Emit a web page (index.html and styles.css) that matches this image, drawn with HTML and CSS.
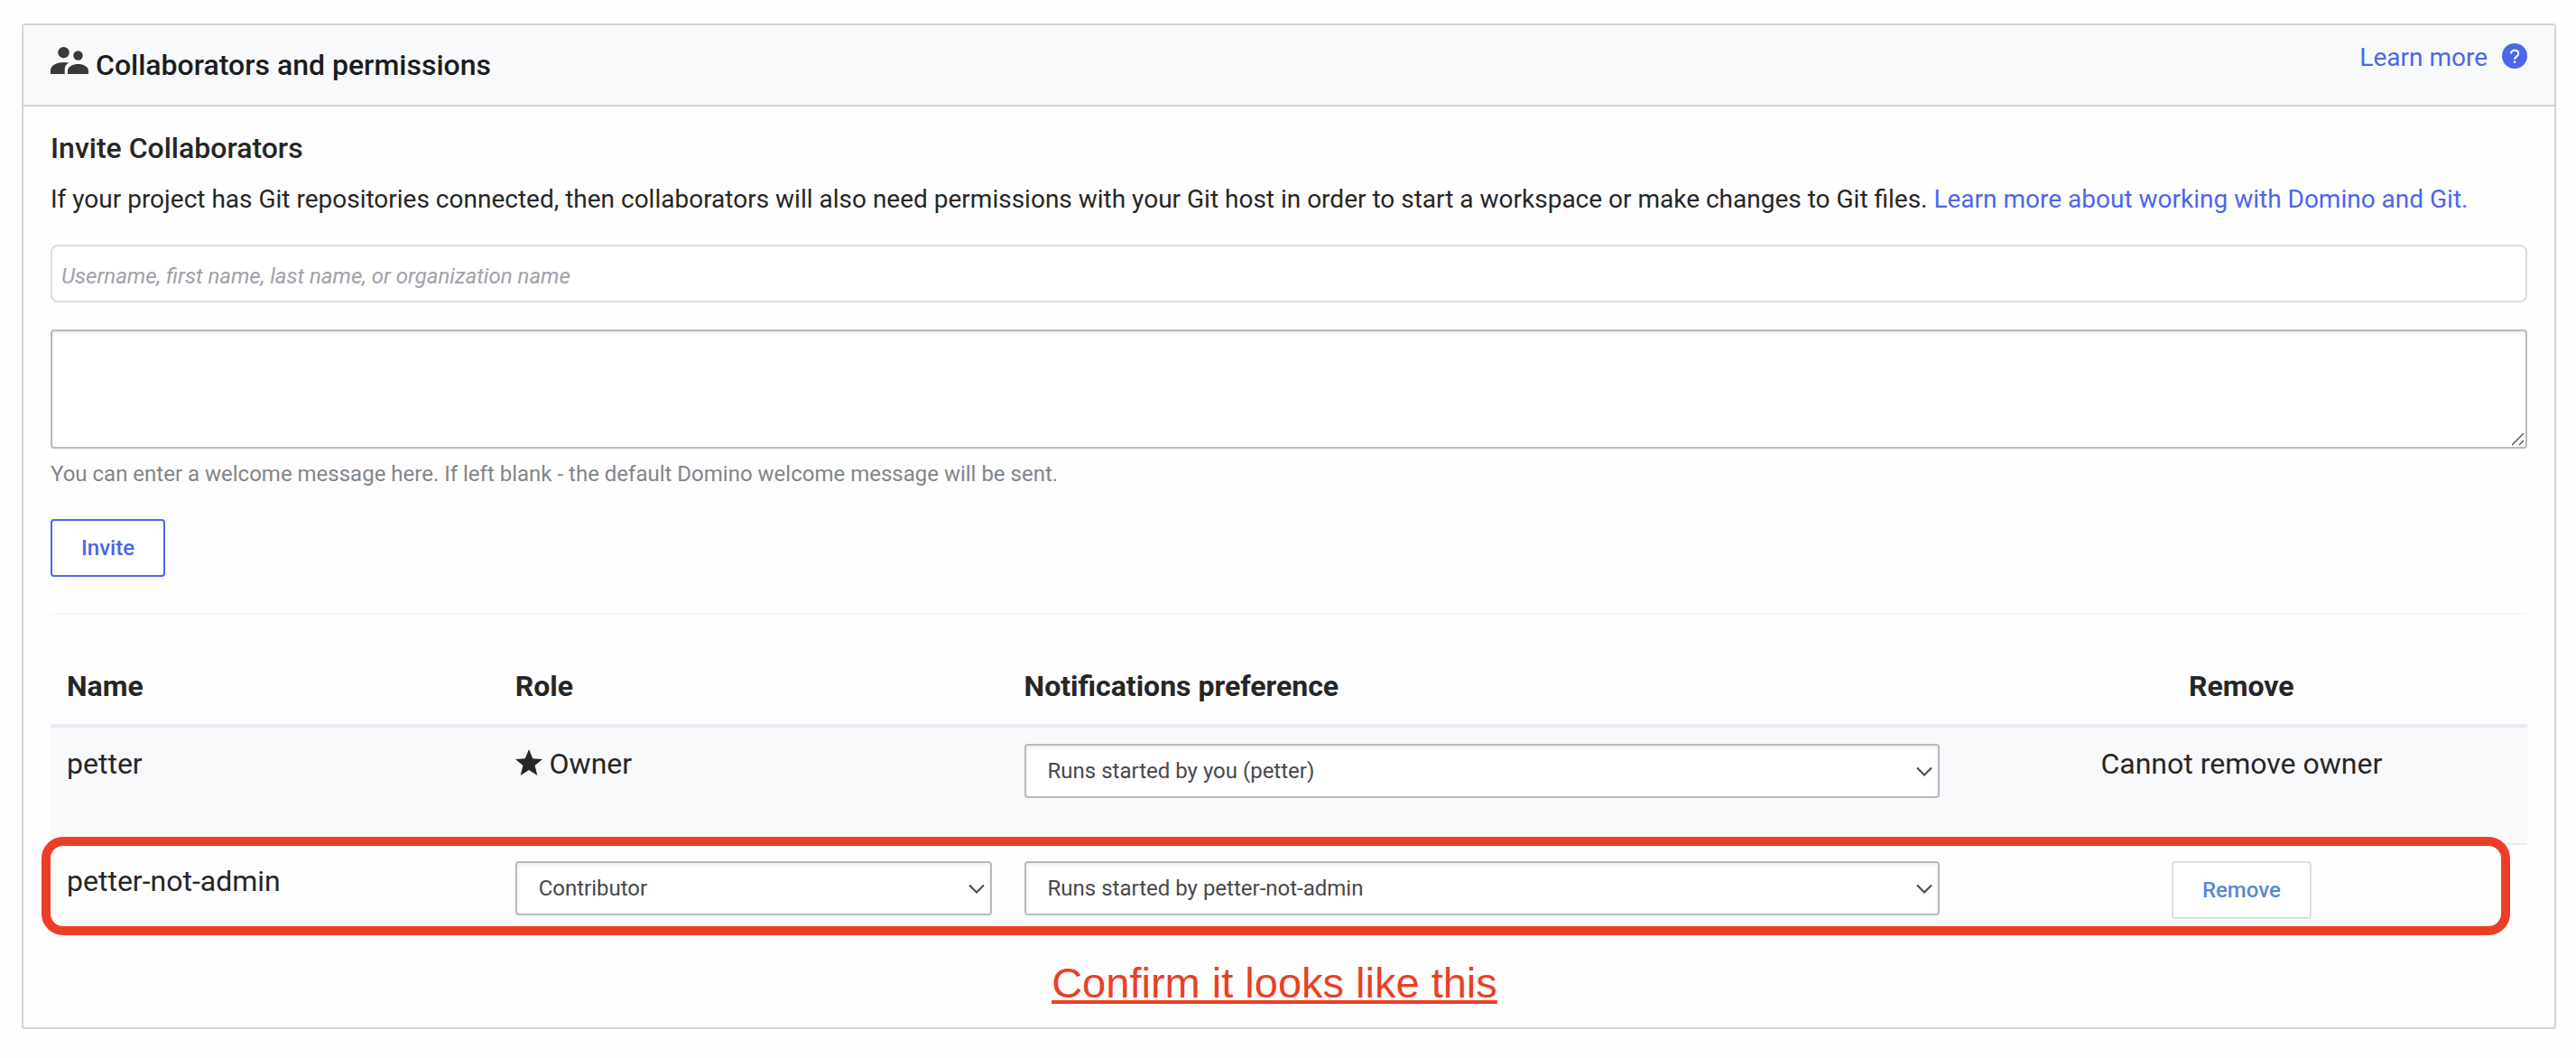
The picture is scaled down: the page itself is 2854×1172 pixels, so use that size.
FILE: index.html
```html
<!DOCTYPE html>
<html lang="en">
<head>
<meta charset="utf-8">
<title>Collaborators and permissions</title>
<link rel="stylesheet" href="styles.css">
</head>
<body>
<main class="card">
  <header class="card-header">
    <h1 class="card-title">
      <svg class="people-icon" viewBox="0 0 42 30" aria-hidden="true"><circle cx="14.500" cy="6.200" r="6.200"/><circle cx="30.500" cy="9.500" r="5.200"/><path d="M0 30v-4C0 20 8 17 15 17c1.800 0 3.300.2 5 .5-3.200 2.300-4.300 4.700-4.300 7.700V30z"/><path d="M19 30v-3.500c0-5 6-7.500 11.500-7.500S42 21.500 42 26.500V30z"/></svg>
      Collaborators and permissions
    </h1>
    <a class="learn-more" href="#">Learn more
      <svg class="help-icon" viewBox="0 0 28 28" aria-hidden="true"><circle cx="14" cy="14" r="14" fill="#4b66eb"/><path d="M10 11.500c0-2.400 1.700-3.700 4.100-3.700s4.200 1.300 4.200 3.500c0 3-4.100 3.200-4.100 6.500" fill="none" stroke="#fff" stroke-width="2"/><path d="M13 19.500h2.200v2.200H13z" fill="#fff"/></svg>
    </a>
  </header>
  <div class="card-body">
    <form class="invite">
      <h2 class="section-title">Invite Collaborators</h2>
      <p class="intro">If your project has Git repositories connected, then collaborators will also need permissions with your Git host in order to start a workspace or make changes to Git files. <a href="#">Learn more about working with Domino and Git.</a></p>
      <input class="user-input" type="text" aria-label="Collaborator" placeholder="Username, first name, last name, or organization name">
      <textarea class="message" id="message" aria-describedby="message-help" aria-label="Welcome message"></textarea>
      <p class="help-text" id="message-help">You can enter a welcome message here. If left blank - the default Domino welcome message will be sent.</p>
      <button class="button button-primary" type="button">Invite</button>
    </form>
    <table class="members">
      <colgroup><col class="col-name"><col class="col-role"><col class="col-notify"><col></colgroup>
      <thead>
        <tr><th>Name</th><th>Role</th><th>Notifications preference</th><th class="center">Remove</th></tr>
      </thead>
      <tbody>
        <tr class="owner-row">
          <td>petter</td>
          <td><svg class="star-icon" viewBox="0 0 30 29" aria-hidden="true"><path d="M15 0l4.200 10.200L30 11l-8.400 7 2.700 11L15 23l-9.300 6 2.700-11L0 11l10.800-.8z"/></svg> Owner</td>
          <td><span class="select"><select aria-label="Notifications for petter"><option>Runs started by you (petter)</option></select><svg class="chevron" viewBox="0 0 18 12" aria-hidden="true"><path d="M1 1.500l8 8 8-8"/></svg></span></td>
          <td class="center">Cannot remove owner</td>
        </tr>
        <tr>
          <td>petter-not-admin</td>
          <td><span class="select"><select aria-label="Role of petter-not-admin"><option>Contributor</option></select><svg class="chevron" viewBox="0 0 18 12" aria-hidden="true"><path d="M1 1.500l8 8 8-8"/></svg></span></td>
          <td><span class="select"><select aria-label="Notifications for petter-not-admin"><option>Runs started by petter-not-admin</option></select><svg class="chevron" viewBox="0 0 18 12" aria-hidden="true"><path d="M1 1.500l8 8 8-8"/></svg></span></td>
          <td class="center"><button class="button button-remove" type="button">Remove</button></td>
        </tr>
      </tbody>
    </table>
    <div class="highlight"></div>
    <p class="callout">Confirm it looks like this</p>
  </div>
</main>
</body>
</html>
```
FILE: styles.css
```css
* { box-sizing: border-box; }
body { margin: 26px 22px 32px 24px; background: #fefefe; color: #262626; font: 32px/44px Roboto, sans-serif; }
h1, h2, p { margin: 0; }
a { color: #4b66eb; text-decoration: none; }

.card { border: 2px solid #d0d3d9; border-radius: 4px; box-shadow: 0 2px 3px rgba(0, 0, 0, .06); }
.card-header { display: flex; justify-content: space-between; align-items: flex-start; min-height: 90px; padding: 18px 30px 0; background: #f8f9fb; border-bottom: 2px solid #d0d3d9; }
.card-title { display: flex; gap: 8px; padding-top: 4px; color: #1b1c20; font-size: 32px; font-weight: 500; }
.people-icon { width: 42px; height: 30px; margin-top: 2px; fill: #393939; }
.learn-more { display: flex; gap: 16px; align-items: flex-start; font-size: 28px; line-height: 36px; }
.help-icon { width: 28px; height: 28px; margin-top: 2px; }

.card-body { position: relative; padding: 24px 30px 26px; }
.invite { display: flex; flex-direction: column; align-items: flex-start; padding-bottom: 40px; border-bottom: 2px solid #f7f8fa; }
.section-title { font-size: 32px; font-weight: 500; }
.intro { margin: 15px 0 30px; font-size: 28px; line-height: 40px; }
.user-input { width: 100%; height: 64px; padding: 6px 10px 0; border: 2px solid #dcdddf; border-radius: 8px; background: #fff; font: 24px Roboto, sans-serif; }
.user-input::placeholder { color: #9fa1a9; font-style: italic; opacity: 1; }
.message { display: block; width: 100%; height: 132px; margin: 30px 0 10px; border: 2px solid #b6bac0; border-radius: 4px; background: #fff; box-shadow: inset 0 2px 4px rgba(0, 0, 0, .08); font: 24px Roboto, sans-serif; resize: vertical; }
.message::-webkit-resizer { background: url("data:image/svg+xml,%3Csvg xmlns='http://www.w3.org/2000/svg' viewBox='0 0 15 15'%3E%3Cpath d='M0 13L13 0M8 13l5-5' stroke='%23555' stroke-width='1.400'/%3E%3C/svg%3E") no-repeat; }
.help-text { margin-bottom: 32px; color: #838589; font-size: 24px; line-height: 36px; }

.button { height: 64px; border: 2px solid; border-radius: 4px; background: #fff; font: 500 24px Roboto, sans-serif; }
.button-primary { padding: 0 32px; border-color: #4b66eb; color: #4b66eb; }
.button-remove { padding: 0 32px; border-color: #dcdddf; color: #5688d3; }

.members { width: 100%; margin-top: 40px; border-collapse: separate; border-spacing: 0; table-layout: fixed; }
.col-name { width: 18.100%; }
.col-role { width: 20.550%; }
.col-notify { width: 38.270%; }
.members th { height: 85px; padding: 0 18px 3px; border-bottom: 4px solid #e9eaf1; text-align: left; font-weight: 700; }
.members td { height: 130px; padding: 18px 18px 0; vertical-align: top; }
.members .center { text-align: center; }
.owner-row td { background: #f8f9fb; border-bottom: 2px solid #e9eaf1; }
.star-icon { width: 30px; height: 29px; fill: #262626; vertical-align: -2px; }
.select { display: block; position: relative; }
.select select { display: block; width: 100%; height: 60px; padding: 0 24px; appearance: none; border: 2px solid #b6bac0; border-radius: 4px; background: #fff; box-shadow: inset 0 2px 4px rgba(0, 0, 0, .08); color: #47484c; font: 24px Roboto, sans-serif; }
.chevron { position: absolute; top: 25px; right: 8px; width: 18px; height: 12px; fill: none; stroke: #47484c; stroke-width: 2; pointer-events: none; }
.highlight { position: absolute; right: 49px; bottom: 102px; left: 20px; height: 109px; border: 10px solid #ea3f25; border-radius: 24px; pointer-events: none; }
.callout { padding-right: 32px; color: #ea3f25; font: 47px/46px "Liberation Sans", sans-serif; text-align: center; text-decoration: underline; }
```
